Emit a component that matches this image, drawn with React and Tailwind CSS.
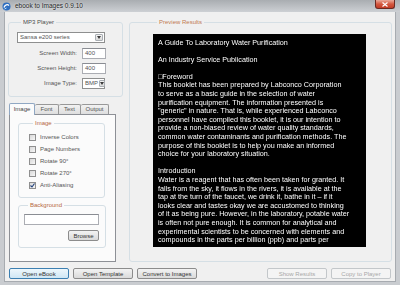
import React from 'react';

const previewLines = [
    'A Guide To Laboratory Water Purification',
    '',
    'An Industry Service Publication',
    '',
    '\u25A1Foreword',
    'This booklet has been prepared by Labconco Corporation',
    'to serve as a basic guide in the selection of water',
    'purification equipment. The information presented is',
    '"generic" in nature. That is, while experienced Labconco',
    'personnel have compiled this booklet, it is our intention to',
    'provide a non-biased review of water quality standards,',
    'common water contaminants and purification methods. The',
    'purpose of this booklet is to help you make an informed',
    'choice for your laboratory situation.',
    '',
    'Introduction',
    'Water is a reagent that has often been taken for granted. It',
    'falls from the sky, it flows in the rivers, it is available at the',
    'tap at the turn of the faucet, we drink it, bathe in it \u2013 if it',
    'looks clear and tastes okay we are accustomed to thinking',
    'of it as being pure. However, in the laboratory, potable water',
    'is often not pure enough. It is common for analytical and',
    'experimental scientists to be concerned with elements and',
    'compounds in the parts per billion (ppb) and parts per',
];

const GroupBox = ({ label, labelClass, className, children }) => (
    <fieldset className={`border border-[#d5dfe5] rounded-[3px] ${className}`}>
        <legend className={`ml-[4px] px-[2px] text-[6px] leading-[10px] ${labelClass}`}>{label}</legend>
        {children}
    </fieldset>
);

const Combo = ({ value, className }) => (
    <div className={`flex h-[11px] border border-[#8e8f8f] bg-white ${className}`}>
        <span className="flex-1 pl-[2px] text-[6px] leading-[9px] text-[#555]">{value}</span>
        <span className="w-[8px] m-[1px] rounded-[1px] border border-[#a9aeb3] bg-gradient-to-b from-[#f4f4f4] to-[#d9d9d9] flex items-center justify-center">
            <svg width="4" height="3" viewBox="0 0 4 3">
                <path d="M0 0h4L2 3z" fill="#3a3a3a" />
            </svg>
        </span>
    </div>
);

const TextInput = ({ value, className }) => (
    <div className={`h-[11px] border border-[#abadb3] border-t-[#8a8d93] bg-white pl-[2px] text-[6px] leading-[9px] text-[#555] ${className}`}>
        {value}
    </div>
);

const Check = ({ label, checked }) => (
    <div className="flex items-center h-[12px] gap-[4px]">
        <span className="w-[7px] h-[7px] border border-[#8f8f8f] bg-gradient-to-br from-[#d8d8d8] to-[#f7f7f7] flex items-center justify-center">
            {checked && (
                <svg width="5" height="5" viewBox="0 0 5 5">
                    <path d="M0.5 2.5L2 4L4.5 0.5" stroke="#21407a" strokeWidth="1.1" fill="none" />
                </svg>
            )}
        </span>
        <span className="text-[6px] leading-[8px] text-[#555]">{label}</span>
    </div>
);

const Btn = ({ children, variant, className }) => {
    const styles =
        variant === 'primary'
            ? 'border-[#3c7fb1] bg-gradient-to-b from-[#eef7fc] to-[#cfe7f5] text-[#333]'
            : variant === 'disabled'
            ? 'border-[#c3c7ca] bg-[#f4f4f4] text-[#a8a8a8]'
            : 'border-[#8c8c8c] bg-gradient-to-b from-[#f3f3f3] to-[#dadada] text-[#333]';
    return (
        <div className={`h-[11px] flex items-center justify-center rounded-[2px] border text-[6px] leading-none ${styles} ${className}`}>
            {children}
        </div>
    );
};

const App = () => {
    return (
        <div className="w-[400px] h-[285px] bg-[#c9ccd0] flex flex-col overflow-hidden font-['Liberation_Sans',Arial,sans-serif]">
            {/* title bar */}
            <div className="h-[12px] flex items-center bg-gradient-to-b from-[#a9adb1] to-[#cdd0d4]">
                <svg className="ml-[2px]" width="9" height="9" viewBox="0 0 9 9">
                    <circle cx="4.5" cy="4.5" r="4" fill="#2f6fc0" />
                    <path d="M2 5.5c1-3 3.5-3.5 5-2" stroke="#fff" strokeWidth="1.3" fill="none" />
                    <path d="M2.5 7l2-1" stroke="#bfe0ff" strokeWidth="1" />
                </svg>
                <span className="ml-[4px] text-[6.5px] leading-none text-[#1e1e1e] [text-shadow:0_0_2px_#fff]">
                    ebook to Images 0.9.10
                </span>
                <div className="ml-auto mr-[5px] self-start w-[20px] h-[9px] rounded-b-[3px] border border-t-0 border-[#6b2a23] bg-gradient-to-b from-[#e9a99b] via-[#d4573f] to-[#c23b25] flex items-center justify-center">
                    <svg width="6" height="5" viewBox="0 0 6 5">
                        <path d="M0.5 0.5L5.5 4.5M5.5 0.5L0.5 4.5" stroke="#fff" strokeWidth="1.2" />
                    </svg>
                </div>
            </div>

            {/* window body */}
            <div className="flex-1 mx-[4px] mb-[3px] bg-[#f0f0f0] border border-[#a7abb0] border-t-0 pl-[3px] pr-[3px] pt-[5px] flex flex-col">
                <div className="h-[245px] flex">
                    {/* left column */}
                    <div className="w-[115px] flex flex-col">
                        <GroupBox label="MP3 Player" labelClass="text-[#4d4d4d]" className="h-[80px] pl-[8px]">
                            <Combo value="Sansa e200 series" className="w-[88px] mt-[5px]" />
                            <div className="flex items-center mt-[5px]">
                                <span className="w-[60px] text-right text-[6px] text-[#555]">Screen Width:</span>
                                <TextInput value="400" className="ml-[5px] w-[24px]" />
                            </div>
                            <div className="flex items-center mt-[4px]">
                                <span className="w-[60px] text-right text-[6px] text-[#555]">Screen Height:</span>
                                <TextInput value="400" className="ml-[5px] w-[24px]" />
                            </div>
                            <div className="flex items-center mt-[4px]">
                                <span className="w-[60px] text-right text-[6px] text-[#555]">Image Type:</span>
                                <Combo value="BMP" className="ml-[5px] w-[23px]" />
                            </div>
                        </GroupBox>

                        {/* tab control */}
                        <div className="mt-[6px] ml-[1px] w-[107px] flex-1 flex flex-col">
                            <div className="h-[11px] flex items-end">
                                <div className="relative z-10 mb-[-1px] w-[26px] h-[12px] border border-b-0 border-[#8fa7c3] rounded-t-[2px] bg-[#fbfbfb] flex items-center justify-center text-[6px] text-[#444]">
                                    Image
                                </div>
                                <div className="w-[24px] h-[10px] border border-b-0 border-l-0 border-[#989898] rounded-t-[2px] bg-gradient-to-b from-[#f2f2f2] to-[#dedede] flex items-center justify-center text-[6px] text-[#555]">
                                    Font
                                </div>
                                <div className="w-[22px] h-[10px] border border-b-0 border-l-0 border-[#989898] rounded-t-[2px] bg-gradient-to-b from-[#f2f2f2] to-[#dedede] flex items-center justify-center text-[6px] text-[#555]">
                                    Text
                                </div>
                                <div className="w-[28px] h-[10px] border border-b-0 border-l-0 border-[#989898] rounded-t-[2px] bg-gradient-to-b from-[#f2f2f2] to-[#dedede] flex items-center justify-center text-[6px] text-[#555]">
                                    Output
                                </div>
                            </div>
                            <div className="flex-1 border border-[#8d9096] bg-[#fbfbfb] pt-[3px] pl-[8px] pr-[10px]">
                                <GroupBox label="Image" labelClass="text-[#b5673f]" className="pl-[10px] pt-[3px] pb-[6px]">
                                    <Check label="Inverse Colors" />
                                    <Check label="Page Numbers" />
                                    <Check label="Rotate 90°" />
                                    <Check label="Rotate 270°" />
                                    <Check label="Anti-Aliasing" checked />
                                </GroupBox>
                                <GroupBox label="Background" labelClass="text-[#b5673f]" className="mt-[2px] pl-[5px] pr-[6px] pb-[6px] flex flex-col">
                                    <TextInput value="" className="mt-[4px] w-[75px]" />
                                    <Btn className="mt-[5px] ml-auto w-[31px] h-[10px]">Browse</Btn>
                                </GroupBox>
                            </div>
                        </div>
                    </div>

                    {/* preview */}
                    <GroupBox label="Preview Results" labelClass="text-[#c07a52]" className="ml-[6px] flex-1 pl-[23px]">
                        <div className="mt-[7px] w-[213px] h-[213px] bg-black overflow-hidden pl-[5px] pt-[4.5px] text-white text-[7.2px] leading-[8.6px] will-change-transform">
                            {previewLines.map((line, i) => (
                                <div key={i} className="h-[8.6px] whitespace-nowrap">
                                    {line}
                                </div>
                            ))}
                        </div>
                    </GroupBox>
                </div>

                {/* bottom buttons */}
                <div className="mt-[6px] flex">
                    <div className="ml-[1px] flex gap-[4px]">
                        <Btn variant="primary" className="w-[60px]">Open eBook</Btn>
                        <Btn className="w-[60px]">Open Template</Btn>
                        <Btn className="w-[60px]">Convert to Images</Btn>
                    </div>
                    <div className="ml-auto mr-[1px] flex gap-[4px]">
                        <Btn variant="disabled" className="w-[60px]">Show Results</Btn>
                        <Btn variant="disabled" className="w-[60px]">Copy to Player</Btn>
                    </div>
                </div>
            </div>
        </div>
    );
};

export default App;
